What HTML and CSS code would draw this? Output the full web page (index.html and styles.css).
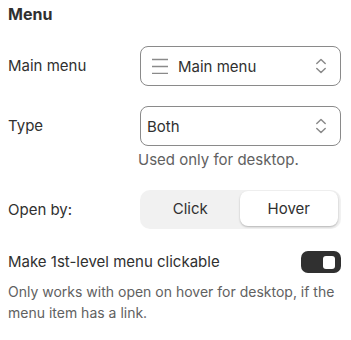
FILE: index.html
```html
<!DOCTYPE html>
<html lang="en">

<head>
    <meta charset="UTF-8">
    <meta name="viewport" content="width=device-width, initial-scale=1.0">
    <title>Menu settings</title>
    <link rel="stylesheet" href="styles.css">
</head>

<body>
    <div class="painel">
        <h2 class="titulo">Menu</h2>

        <div class="linha">
            <span class="rotulo">Main menu</span>
            <div class="campo">
                <div class="seletor">
                    <svg class="icone-menu" width="18" height="16" viewBox="0 0 18 16">
                        <path d="M1 1.5h16M1 8.5h16M1 15.5h16" stroke="#8a8a8a" stroke-width="1.7" fill="none"/>
                    </svg>
                    <span class="valor">Main menu</span>
                    <svg class="seta" width="12" height="18" viewBox="0 0 12 18">
                        <path d="M1.8 6.5 6 2.5 10.2 6.5M1.8 11.5 6 15.5 10.2 11.5" stroke="#8a8a8a" stroke-width="1.5" fill="none" stroke-linecap="round" stroke-linejoin="round"/>
                    </svg>
                </div>
            </div>
        </div>

        <div class="linha">
            <span class="rotulo">Type</span>
            <div class="campo">
                <div class="seletor">
                    <span class="valor">Both</span>
                    <svg class="seta" width="12" height="18" viewBox="0 0 12 18">
                        <path d="M1.8 6.5 6 2.5 10.2 6.5M1.8 11.5 6 15.5 10.2 11.5" stroke="#8a8a8a" stroke-width="1.5" fill="none" stroke-linecap="round" stroke-linejoin="round"/>
                    </svg>
                </div>
                <p class="ajuda">Used only for desktop.</p>
            </div>
        </div>

        <div class="linha">
            <span class="rotulo">Open by:</span>
            <div class="campo">
                <div class="segmentos">
                    <span class="segmento">Click</span>
                    <span class="segmento ativo">Hover</span>
                </div>
            </div>
        </div>

        <div class="linha-toggle">
            <span class="rotulo">Make 1st-level menu clickable</span>
            <span class="toggle"><span class="bolinha"></span></span>
        </div>
        <p class="descricao">Only works with open on hover for desktop, if the menu item has a link.</p>
    </div>
</body>

</html>
```

FILE: styles.css
```css
* {
    margin: 0;
    padding: 0;
    box-sizing: border-box;
}

body {
    font-family: Inter, "Noto Sans", sans-serif;
    font-size: 15px;
    color: #303030;
    background-color: #ffffff;
}

.painel {
    padding: 4px 10px 8px 8px;
}

.titulo {
    font-size: 16px;
    font-weight: 650;
    line-height: 20px;
}

.linha {
    display: grid;
    grid-template-columns: 132px 1fr;
    align-items: start;
    margin-top: 20px;
}

.linha:first-of-type {
    margin-top: 22px;
}

.rotulo {
    line-height: 40px;
}

.seletor {
    display: flex;
    align-items: center;
    height: 40px;
    border: 1px solid #8a8a8a;
    border-radius: 8px;
    padding: 0 13px 0 6px;
    gap: 9px;
}

.icone-menu {
    margin-left: 4px;
}

.valor {
    flex: 1;
}

.ajuda {
    line-height: 20px;
    color: #616161;
    margin-top: 4px;
    margin-left: -2px;
}

.segmentos {
    display: flex;
    height: 39px;
    background-color: #f1f1f1;
    border-radius: 10px;
    padding: 1px 3px 3px 1px;
}

.segmento {
    flex: 1;
    display: flex;
    align-items: center;
    justify-content: center;
    border-radius: 8px;
}

.segmento.ativo {
    background-color: #ffffff;
    box-shadow: 0 1px 2px rgba(0, 0, 0, 0.25);
}

.linha-toggle {
    display: flex;
    justify-content: space-between;
    align-items: center;
    margin-top: 20px;
    height: 24px;
}

.linha-toggle .rotulo {
    line-height: 24px;
}

.toggle {
    display: flex;
    align-items: center;
    justify-content: flex-end;
    width: 40px;
    height: 22px;
    background-color: #303030;
    border-radius: 7px;
    padding-right: 6px;
}

.bolinha {
    width: 12px;
    height: 13px;
    background-color: #ffffff;
    border-radius: 3px;
}

.descricao {
    font-size: 14px;
    color: #616161;
    line-height: 21px;
    margin-top: 7px;
}
```
